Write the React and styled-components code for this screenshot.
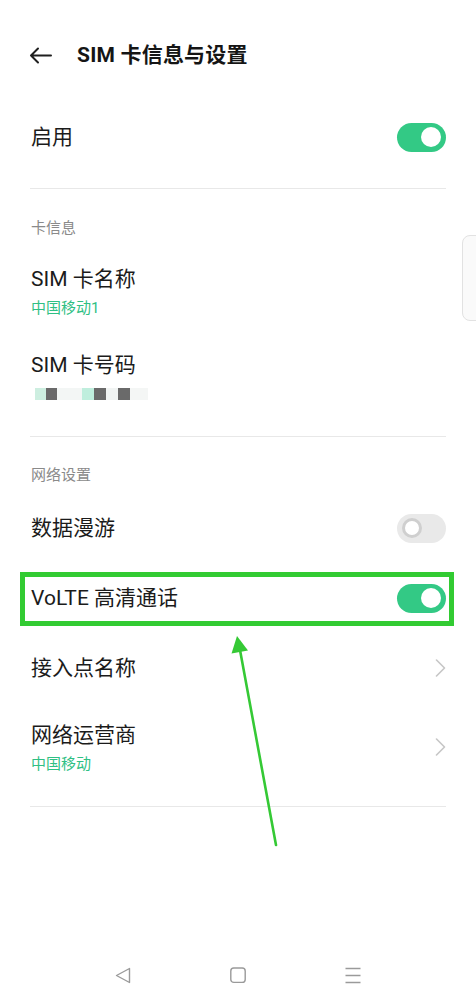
import React from "react";
import styled, { createGlobalStyle } from "styled-components";

const GlobalStyle = createGlobalStyle`
  html, body { margin: 0; padding: 0; background: #ffffff; }
  body { font-family: Roboto, "Noto Sans CJK SC", "Noto Sans", sans-serif; }
  * { box-sizing: border-box; }
`;

const Page = styled.div`
  position: relative;
  width: 476px;
  height: 992px;
  display: flex;
  flex-direction: column;
  background: #ffffff;
  overflow: hidden;
  color: #1b1b1b;
`;

const Header = styled.header`
  height: 102px;
  padding: 8px 0 0 29px;
  display: flex;
  align-items: center;
  gap: 25px;
`;

const Title = styled.h1`
  margin: 0;
  font-size: 21px;
  line-height: 28px;
  font-weight: 700;
  color: #151515;
  letter-spacing: 0.2px;
`;

const Row = styled.div`
  position: relative;
  height: ${(p) => p.$h || 70}px;
  padding: 0 30px 0 31px;
  display: flex;
  align-items: center;
  justify-content: space-between;
`;

const TextCol = styled.div`
  display: flex;
  flex-direction: column;
`;

const Label = styled.div`
  font-size: 21px;
  line-height: 28px;
  color: #1b1b1b;
`;

const Sub = styled.div`
  margin-top: 5px;
  font-size: 15px;
  line-height: 20px;
  color: #2fc084;
  height: 20px;
  display: flex;
  align-items: center;
`;

const Divider = styled.div`
  height: 1px;
  margin: ${(p) => p.$top || 16}px 30px 0 30px;
  background: #e8e8e8;
`;

const SectionLabel = styled.div`
  padding: ${(p) => p.$top || 28}px 31px ${(p) => p.$bottom || 8}px;
  font-size: 15px;
  line-height: 20px;
  color: #8a8a8a;
`;

const Track = styled.div`
  width: 49px;
  height: 29px;
  border-radius: 15px;
  background: ${(p) => (p.$on ? "#33c985" : "#e9e9e9")};
  display: flex;
  align-items: center;
  justify-content: ${(p) => (p.$on ? "flex-end" : "flex-start")};
  padding: 0 5px;
`;

const Knob = styled.div`
  width: 20px;
  height: 20px;
  border-radius: 50%;
  background: #ffffff;
  border: ${(p) => (p.$on ? "none" : "3.5px solid #cfcfcf")};
`;

const Switch = ({ on }) => (
  <Track $on={on}>
    <Knob $on={on} />
  </Track>
);

const Chevron = () => (
  <svg width="11" height="18" viewBox="0 0 11 18">
    <path d="M1.5 1 L9.5 9 L1.5 17" fill="none" stroke="#c6c6c6" strokeWidth="1.6" strokeLinecap="round" strokeLinejoin="round" />
  </svg>
);

const Redacted = styled.div`
  display: flex;
  align-items: center;
  height: 12px;
  padding-left: 4px;
`;

const Block = styled.span`
  display: inline-block;
  width: ${(p) => p.$w}px;
  height: 12px;
  background: ${(p) => p.$c};
`;

const Highlight = styled.div`
  position: absolute;
  left: 20px;
  right: 22px;
  top: 9px;
  height: 54px;
  border: 5px solid #32cb32;
  pointer-events: none;
`;

const ScrollThumb = styled.div`
  position: absolute;
  left: 462px;
  top: 235px;
  width: 22px;
  height: 86px;
  border-radius: 8px;
  border: 1px solid #e2e2e2;
  background: #fafafa;
`;

const ArrowLayer = styled.svg`
  position: absolute;
  left: 0;
  top: 0;
  pointer-events: none;
`;

const Nav = styled.nav`
  margin-top: auto;
  height: 34px;
  padding: 0 115px;
  display: flex;
  align-items: center;
  justify-content: space-between;
`;

const BackArrow = () => (
  <svg width="23" height="17" viewBox="0 0 23 17">
    <path d="M22 8.5 H2 M9 1.5 L2 8.5 L9 15.5" fill="none" stroke="#1f1f1f" strokeWidth="2" strokeLinecap="round" strokeLinejoin="round" />
  </svg>
);

const NavBack = () => (
  <svg width="16" height="17" viewBox="0 0 16 17">
    <path d="M14.5 1.5 L1.5 8.5 L14.5 15.5 Z" fill="none" stroke="#9a9a9a" strokeWidth="1.4" strokeLinejoin="round" />
  </svg>
);
const NavHome = () => (
  <svg width="16" height="17" viewBox="0 0 16 17">
    <rect x="0.8" y="1" width="14.4" height="14.4" rx="3" fill="none" stroke="#9a9a9a" strokeWidth="1.4" />
  </svg>
);
const NavMenu = () => (
  <svg width="16" height="17" viewBox="0 0 16 17">
    <path d="M0.5 1.5 H15.5 M0.5 8.5 H15.5 M0.5 15.5 H15.5" fill="none" stroke="#9a9a9a" strokeWidth="1.4" />
  </svg>
);

export default function App() {
  return (
    <>
      <GlobalStyle />
      <Page>
        <Header>
          <BackArrow />
          <Title>SIM 卡信息与设置</Title>
        </Header>

        <Row>
          <Label>启用</Label>
          <Switch on />
        </Row>
        <Divider $top={16} />

        <SectionLabel $top={29} $bottom={10}>卡信息</SectionLabel>
        <Row $h={86}>
          <TextCol>
            <Label>SIM 卡名称</Label>
            <Sub>中国移动1</Sub>
          </TextCol>
        </Row>
        <Row $h={86}>
          <TextCol>
            <Label>SIM 卡号码</Label>
            <Sub>
              <Redacted>
                <Block $w={11} $c="#cdeee0" />
                <Block $w={11} $c="#6a6a6a" />
                <Block $w={25} $c="#f3f6f5" />
                <Block $w={12} $c="#bfeedd" />
                <Block $w={12} $c="#6a6a6a" />
                <Block $w={12} $c="#f1f4f3" />
                <Block $w={12} $c="#6a6a6a" />
                <Block $w={18} $c="#f4f6f5" />
              </Redacted>
            </Sub>
          </TextCol>
        </Row>
        <Divider $top={16} />

        <SectionLabel $top={28} $bottom={8}>网络设置</SectionLabel>
        <Row>
          <Label>数据漫游</Label>
          <Switch on={false} />
        </Row>
        <Row>
          <Label>VoLTE 高清通话</Label>
          <Switch on />
          <Highlight />
        </Row>
        <Row>
          <Label>接入点名称</Label>
          <Chevron />
        </Row>
        <Row $h={88}>
          <TextCol>
            <Label>网络运营商</Label>
            <Sub>中国移动</Sub>
          </TextCol>
          <Chevron />
        </Row>
        <Divider $top={15} />

        <Nav>
          <NavBack />
          <NavHome />
          <NavMenu />
        </Nav>

        <ScrollThumb />
        <ArrowLayer width="476" height="992" viewBox="0 0 476 992">
          <line x1="276" y1="845" x2="240" y2="650" stroke="#35c935" strokeWidth="2.6" strokeLinecap="round" />
          <polygon points="237,636 248,650.5 231.5,653.5" fill="#35c935" />
        </ArrowLayer>
      </Page>
    </>
  );
}
